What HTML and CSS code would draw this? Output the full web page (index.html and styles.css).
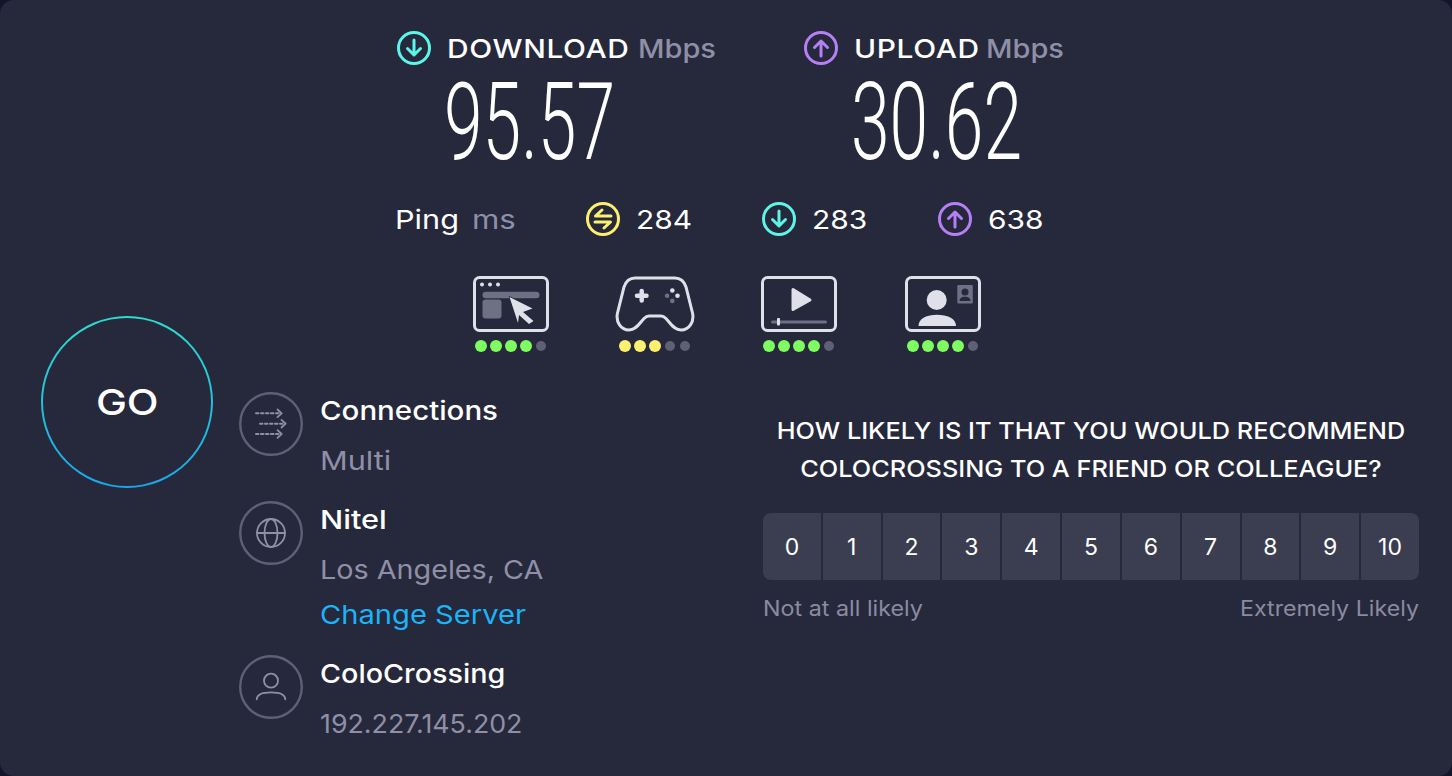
FILE: index.html
```html
<!DOCTYPE html>
<html lang="en">
<head>
<meta charset="utf-8">
<title>Speedtest result</title>
<link rel="stylesheet" href="styles.css">
</head>
<body>
<main class="panel">
  <section class="speeds">
    <div class="speed">
      <div class="speed-head">
        <svg class="ic34 cyan" viewBox="0 0 34 34"><circle cx="17" cy="17" r="15.5"/><path d="M17 9v15M10.5 17.5 17 24l6.5-6.5"/></svg>
        <span class="speed-label w-dl">DOWNLOAD</span><span class="speed-unit">Mbps</span>
      </div>
      <div class="speed-num"><span>95.57</span></div>
    </div>
    <div class="speed">
      <div class="speed-head">
        <svg class="ic34 purple" viewBox="0 0 34 34"><circle cx="17" cy="17" r="15.5"/><path d="M17 25V10M10.5 16.5 17 10l6.5 6.5"/></svg>
        <span class="speed-label w-ul">UPLOAD</span><span class="speed-unit">Mbps</span>
      </div>
      <div class="speed-num"><span>30.62</span></div>
    </div>
  </section>

  <section class="ping">
    <div class="ping-name"><span class="ping-word">Ping</span><span class="ping-unit">ms</span></div>
    <div class="ping-item">
      <svg class="ic34 yellow" viewBox="0 0 34 34"><circle cx="17" cy="17" r="15.5"/><path d="M25 14H9.5L16 8M9 20h15.5L18 26"/></svg>
      <span class="ping-val">284</span>
    </div>
    <div class="ping-item">
      <svg class="ic34 cyan" viewBox="0 0 34 34"><circle cx="17" cy="17" r="15.5"/><path d="M17 9v15M10.5 17.5 17 24l6.5-6.5"/></svg>
      <span class="ping-val">283</span>
    </div>
    <div class="ping-item">
      <svg class="ic34 purple" viewBox="0 0 34 34"><circle cx="17" cy="17" r="15.5"/><path d="M17 25V10M10.5 16.5 17 10l6.5 6.5"/></svg>
      <span class="ping-val">638</span>
    </div>
  </section>

  <div class="lower">
    <section class="quality">
      <div class="q-item">
        <svg class="q-icon" viewBox="0 0 76 56">
          <rect class="q-frame" x="1.5" y="1.5" width="73" height="53" rx="5"/>
          <circle class="q-fill" cx="9" cy="8.5" r="2"/><circle class="q-fill" cx="17" cy="8.5" r="2"/><circle class="q-fill" cx="25" cy="8.5" r="2"/>
          <rect class="q-dim" x="9.5" y="15.7" width="57" height="6.6" rx="3.3"/>
          <rect class="q-dim" x="9.5" y="23.5" width="19" height="19" rx="3"/>
          <path class="q-fill q-cursor" d="M36.5 21 59.5 32.5 50 36 60.5 45 56 48 46 39 45 47Z"/>
        </svg>
        <div class="dots"><i class="dot good"></i><i class="dot good"></i><i class="dot good"></i><i class="dot good"></i><i class="dot"></i></div>
      </div>
      <div class="q-item">
        <svg class="q-icon" viewBox="0 0 80 56">
          <path class="q-frame" d="M20 2H60C66 2 69 5 71 11L77.500 37C79.500 46 74 54 66 54 61 54 58 51 54 46L51 42.500C49 40.500 48 40 46 40H34C32 40 31 40.500 29 42.500L26 46C22 51 19 54 14 54 6 54 .5 46 2.500 37L9 11C11 5 14 2 20 2Z"/>
          <path class="q-pad" d="M26.700 15V24.500M22 19.700H31.500"/>
          <circle class="q-fill" cx="57.300" cy="14.500" r="2.300"/><circle class="q-fill" cx="62.500" cy="19.700" r="2.300"/>
          <circle class="q-dim" cx="52.100" cy="19.700" r="2.300"/><circle class="q-dim" cx="57.300" cy="24.900" r="2.300"/>
        </svg>
        <div class="dots"><i class="dot warn"></i><i class="dot warn"></i><i class="dot warn"></i><i class="dot"></i><i class="dot"></i></div>
      </div>
      <div class="q-item">
        <svg class="q-icon" viewBox="0 0 76 56">
          <rect class="q-frame" x="1.500" y="1.500" width="73" height="53" rx="5"/>
          <path class="q-fill q-round" d="M32 13.500 49 24 32 33.500Z"/>
          <rect class="q-dim" x="10" y="44.500" width="56" height="3" rx="1.500"/>
          <rect class="q-fill" x="16" y="42" width="3" height="7.500" rx="1"/>
        </svg>
        <div class="dots"><i class="dot good"></i><i class="dot good"></i><i class="dot good"></i><i class="dot good"></i><i class="dot"></i></div>
      </div>
      <div class="q-item">
        <svg class="q-icon" viewBox="0 0 76 56">
          <rect class="q-frame" x="1.500" y="1.500" width="73" height="53" rx="5"/>
          <circle class="q-fill" cx="31.700" cy="24" r="10"/>
          <path class="q-fill" d="M13.500 50C13.500 42 22 38.700 32 38.700S51 42 51 50Z"/>
          <rect class="q-dim" x="52.300" y="9" width="15.500" height="18.500" rx="1"/>
          <circle class="q-dark" cx="60" cy="16" r="3.500"/>
          <path class="q-dark" d="M54.500 25C54.500 22 57 20.800 60 20.800S65.500 22 65.500 25Z"/>
        </svg>
        <div class="dots"><i class="dot good"></i><i class="dot good"></i><i class="dot good"></i><i class="dot good"></i><i class="dot"></i></div>
      </div>
    </section>

    <button class="go" type="button"><span class="go-label">GO</span></button>

    <section class="details">
      <div class="info">
        <div class="info-row">
          <svg class="info-icon" viewBox="0 0 64 64"><circle class="info-ring" cx="32" cy="32" r="30.800"/><g class="info-line"><path class="dash" d="M17 21.300h24M21 31.700h24M17 42h24"/><path d="M38.500 17.500 42.700 21.300 38.500 25.100M42.500 27.900 46.700 31.700 42.500 35.500M38.500 38.200 42.700 42 38.500 45.800"/></g></svg>
          <div class="info-text">
            <div class="info-title sx113">Connections</div>
            <div class="info-sub sx118">Multi</div>
          </div>
        </div>
        <div class="info-row">
          <svg class="info-icon" viewBox="0 0 64 64"><circle class="info-ring" cx="32" cy="32" r="30.800"/><g class="info-line"><circle cx="32" cy="32" r="14"/><ellipse cx="32" cy="32" rx="6.500" ry="14"/><path d="M18 32h28"/></g></svg>
          <div class="info-text">
            <div class="info-title sx118">Nitel</div>
            <div class="info-sub sx110">Los Angeles, CA</div>
            <a class="info-link sx112" href="#">Change Server</a>
          </div>
        </div>
        <div class="info-row">
          <svg class="info-icon" viewBox="0 0 64 64"><circle class="info-ring" cx="32" cy="32" r="30.800"/><g class="info-line"><circle cx="32" cy="25.700" r="7"/><path d="M17.700 44.300C18 39 24 37.300 32 37.300S46 39 46.300 44.300"/></g></svg>
          <div class="info-text">
            <div class="info-title sx110">ColoCrossing</div>
            <div class="info-sub sx103">192.227.145.202</div>
          </div>
        </div>
      </div>

      <div class="survey">
        <p class="survey-q">HOW LIKELY IS IT THAT YOU WOULD RECOMMEND<br>COLOCROSSING TO A FRIEND OR COLLEAGUE?</p>
        <div class="scale">
          <span class="cell">0</span><span class="cell">1</span><span class="cell">2</span><span class="cell">3</span><span class="cell">4</span><span class="cell">5</span><span class="cell">6</span><span class="cell">7</span><span class="cell">8</span><span class="cell">9</span><span class="cell">10</span>
        </div>
        <div class="scale-labels"><span class="scale-lo">Not at all likely</span><span class="scale-hi">Extremely Likely</span></div>
      </div>
    </section>
  </div>
</main>
</body>
</html>
```

FILE: styles.css
```css
* { box-sizing: border-box; }
html, body { margin: 0; height: 100%; }
body {
  background: #14152a;
  font-family: "Inter", "Noto Sans", "Liberation Sans", sans-serif;
  color: #fff;
  overflow: hidden;
}
.panel {
  width: 1452px;
  height: 776px;
  background: #26283b;
  border-radius: 14px;
  padding-top: 31px;
}

/* speeds */
.speeds { display: flex; justify-content: center; gap: 87px; padding-left: 10px; }
.speed { width: 262px; }
.speed:first-child { width: 320px; }
.speed-head { display: flex; align-items: center; height: 34px; }
.speed-head .ic34 { margin-right: 16px; }
.speed-label { font-size: 26px; font-weight: 500; letter-spacing: .55px; transform: scaleX(1.15); transform-origin: left center; white-space: nowrap; }
.w-dl { width: 191px; }
.w-ul { width: 132px; }
.speed-unit { font-size: 26px; font-weight: 500; color: #8f90a8; transform: scaleX(1.115); transform-origin: left center; }
.speed-num {
  margin: 4px 0 0 47px;
  height: 107px;
  width: 170px;
  white-space: nowrap;
  font-family: "Roboto", "Liberation Sans", sans-serif;
  font-weight: 300;
  font-size: 107px;
  line-height: 107px;
}
.speed-num span { display: inline-block; transform: scaleX(.65); transform-origin: left center; }

.ic34 { width: 34px; height: 34px; flex: none; fill: none; stroke-width: 3; stroke-linecap: round; stroke-linejoin: round; }
.cyan { stroke: #5df5e8; }
.purple { stroke: #b67ff5; }
.yellow { stroke: #fdf071; }

/* ping */
.ping { display: flex; align-items: center; height: 34px; margin-top: 26px; padding-left: 395px; font-size: 26px; }
.ping-name { width: 191px; display: flex; }
.ping-word { width: 77px; transform: scaleX(1.18); transform-origin: left center; }
.ping-unit { color: #8f90a8; transform: scaleX(1.2); transform-origin: left center; }
.ping-item { display: flex; align-items: center; gap: 16px; width: 176px; }
.ping-val { transform: scaleX(1.15); transform-origin: left center; }

/* lower area: GO overlaps the quality row's height in the first column */
.lower {
  display: grid;
  grid-template-columns: 239px 1fr;
  grid-template-rows: auto 1fr;
  margin-top: 40px;
}
.quality {
  grid-column: 1 / -1;
  grid-row: 1;
  display: flex;
  justify-content: center;
  padding-left: 2px;
}
.q-item { width: 144px; display: flex; flex-direction: column; align-items: center; gap: 8px; }
.q-icon { height: 56px; width: auto; display: block; }
.q-frame { fill: none; stroke: #dfe0ea; stroke-width: 3; }
.q-fill { fill: #dfe0ea; }
.q-dim { fill: #6f7083; }
.q-dark { fill: #26283b; }
.q-pad { fill: none; stroke: #dfe0ea; stroke-width: 4.500; stroke-linecap: round; }
.q-cursor { stroke: #26283b; stroke-width: 1.500; paint-order: stroke; stroke-linejoin: round; }
.q-round { stroke: #dfe0ea; stroke-width: 3; stroke-linejoin: round; }

.dots { display: flex; align-items: center; justify-content: center; gap: 3px; height: 12px; }
.dot { width: 10px; height: 10px; margin: 0 1px; border-radius: 50%; background: #5f6074; }
.dot.good, .dot.warn { width: 12px; height: 12px; margin: 0; }
.dot.good { background: #7dfb60; }
.dot.warn { background: #fdf071; }

.go {
  grid-column: 1;
  grid-row: 1 / 3;
  align-self: start;
  justify-self: start;
  width: 172px;
  height: 172px;
  margin: 40px 0 0 41px;
  padding: 0;
  border: 2px solid transparent;
  border-radius: 50%;
  background: linear-gradient(#26283b, #26283b) padding-box, linear-gradient(#2fdccb, #1aa6ea) border-box;
  color: #fff;
  font: 500 36px "Inter", sans-serif;
}
.go-label { display: inline-block; transform: scaleX(1.15); }

.details { grid-column: 2; grid-row: 2; display: flex; margin-top: 40px; }
.info { width: 524px; display: flex; flex-direction: column; }
.info-row { display: flex; gap: 17px; }
.info-row + .info-row { margin-top: 22px; }
.info-icon { width: 64px; height: 64px; flex: none; }
.info-ring { fill: none; stroke: #5f6075; stroke-width: 2.400; }
.info-line { fill: none; stroke: #8f90a8; stroke-width: 1.800; stroke-linecap: round; stroke-linejoin: round; }
.dash { stroke-width: 2; stroke-dasharray: 2.500 2.500; }
.info-text { display: flex; flex-direction: column; align-items: flex-start; padding-top: 1px; }
.info-title { font-size: 26px; font-weight: 500; line-height: 36px; }
.info-sub { font-size: 26px; line-height: 36px; margin-top: 14px; color: #8f90a8; }
.info-link { font-size: 26px; line-height: 36px; margin-top: 9px; color: #1bb4f8; text-decoration: none; }
.info-title, .info-sub, .info-link { transform-origin: left center; white-space: nowrap; }
.sx103 { transform: scaleX(1.03); }
.sx110 { transform: scaleX(1.105); }
.sx112 { transform: scaleX(1.12); }
.sx113 { transform: scaleX(1.133); }
.sx118 { transform: scaleX(1.18); }

.survey { width: 656px; margin-top: 20px; }
.survey-q { margin: 0; text-align: center; font-size: 23px; font-weight: 500; line-height: 38px; transform: scaleX(1.1); }
.scale { display: flex; gap: 2px; height: 67px; margin-top: 25px; border-radius: 8px; overflow: hidden; }
.cell { flex: 1 1 0; display: flex; align-items: center; justify-content: center; background: #3b3d50; font-size: 23px; }
.scale-labels { display: flex; justify-content: space-between; margin-top: 16px; font-size: 21px; color: #8a8ba0; }
.scale-lo { transform: scaleX(1.11); transform-origin: left center; }
.scale-hi { transform: scaleX(1.105); transform-origin: right center; }
```
